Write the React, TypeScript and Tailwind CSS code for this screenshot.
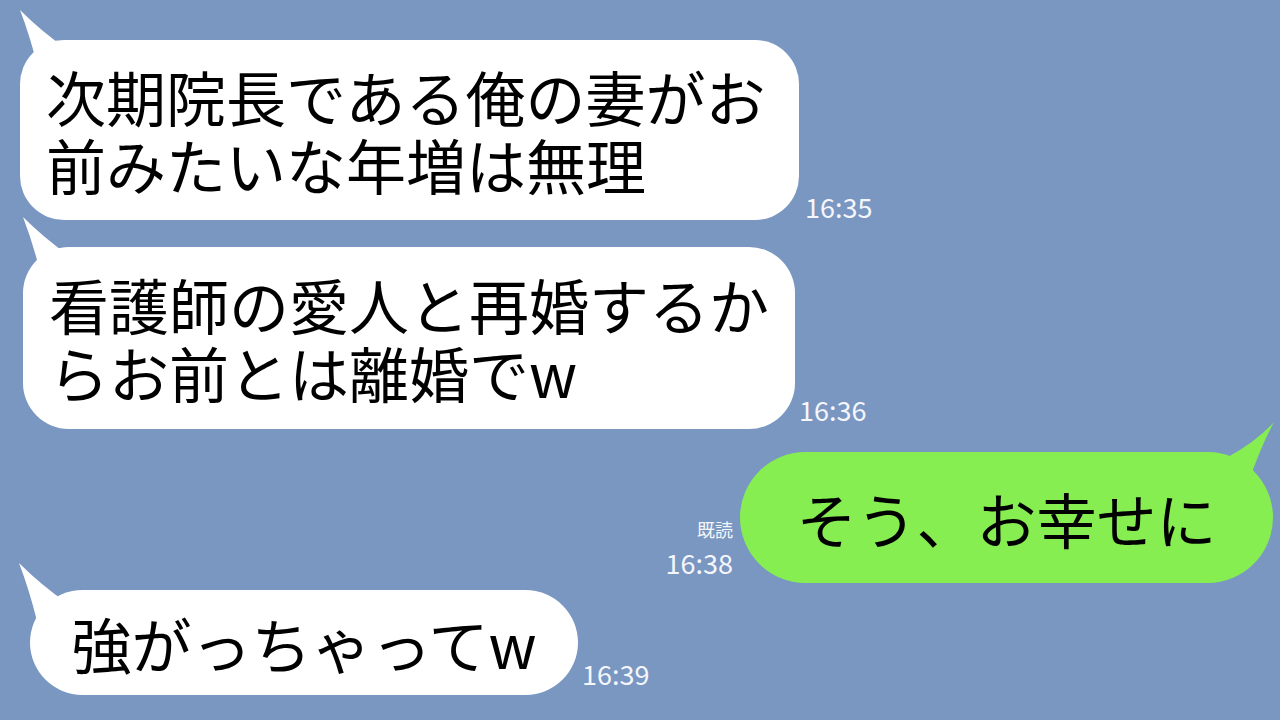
import React from "react";

// LINE風トーク画面（静的）
const FONT = "font-['Noto_Sans_CJK_JP','Noto_Sans',sans-serif]";

const TailLeft = ({ className }: { className: string }) => (
  <svg
    className={`absolute ${className}`}
    width="52"
    height="60"
    viewBox="0 0 52 60"
  >
    <path d="M2 0 Q 12 26 20 58 L 50 40 Q 24 22 2 0 Z" fill="#ffffff" />
  </svg>
);

const TailRight = () => (
  <svg
    className="absolute left-[482px] top-[-30px]"
    width="52"
    height="64"
    viewBox="0 0 52 64"
  >
    <path d="M52 0 Q 34 20 4 36 L 26 62 Q 38 26 52 0 Z" fill="#87ee52" />
  </svg>
);

const Time = ({ children, className }: { children: string; className?: string }) => (
  <span className={`text-[27px] leading-[26px] text-[#f4f6fb] ${className ?? ""}`}>
    {children}
  </span>
);

export default function App() {
  return (
    <div
      className={`w-[1280px] h-[720px] overflow-hidden bg-[#7a97c2] pt-[40px] ${FONT} text-black`}
    >
      {/* 1 */}
      <div className="flex items-end pl-[20px]">
        <div className="relative w-[779px] h-[180px] rounded-[44px] bg-white flex items-center pl-[26px]">
          <TailLeft className="left-[-2px] top-[-30px]" />
          <p className="relative text-[60px] leading-[68px]">
            次期院長である俺の妻がお
            <br />
            前みたいな年増は無理
          </p>
        </div>
        <Time className="ml-[6px]">16:35</Time>
      </div>

      {/* 2 */}
      <div className="flex items-end pl-[23px] mt-[27px]">
        <div className="relative w-[772px] h-[182px] rounded-[46px] bg-white flex items-center pl-[26px]">
          <TailLeft className="left-[-2px] top-[-30px]" />
          <p className="relative text-[60px] leading-[68px]">
            看護師の愛人と再婚するか
            <br />
            らお前とは離婚でw
          </p>
        </div>
        <Time className="ml-[4px] mb-[6px]">16:36</Time>
      </div>

      {/* 3 自分 */}
      <div className="flex items-end justify-end pr-[7px] mt-[23px]">
        <div className="flex flex-col items-end mr-[7px] mb-[7px]">
          <span className="text-[18px] leading-[22px] text-[#f4f6fb] mb-[10px]">既読</span>
          <Time>16:38</Time>
        </div>
        <div className="relative w-[533px] h-[131px] rounded-full bg-[#87ee52] flex items-center justify-center">
          <TailRight />
          <p className="relative text-[60px] leading-[68px]">そう、お幸せに</p>
        </div>
      </div>

      {/* 4 */}
      <div className="flex items-end pl-[30px] mt-[7px]">
        <div className="relative w-[548px] h-[105px] rounded-full bg-white flex items-center justify-center">
          <TailLeft className="left-[-13px] top-[-27px]" />
          <p className="relative text-[60px] leading-[68px]">強がっちゃってw</p>
        </div>
        <Time className="ml-[4px] mb-[8px]">16:39</Time>
      </div>
    </div>
  );
}
